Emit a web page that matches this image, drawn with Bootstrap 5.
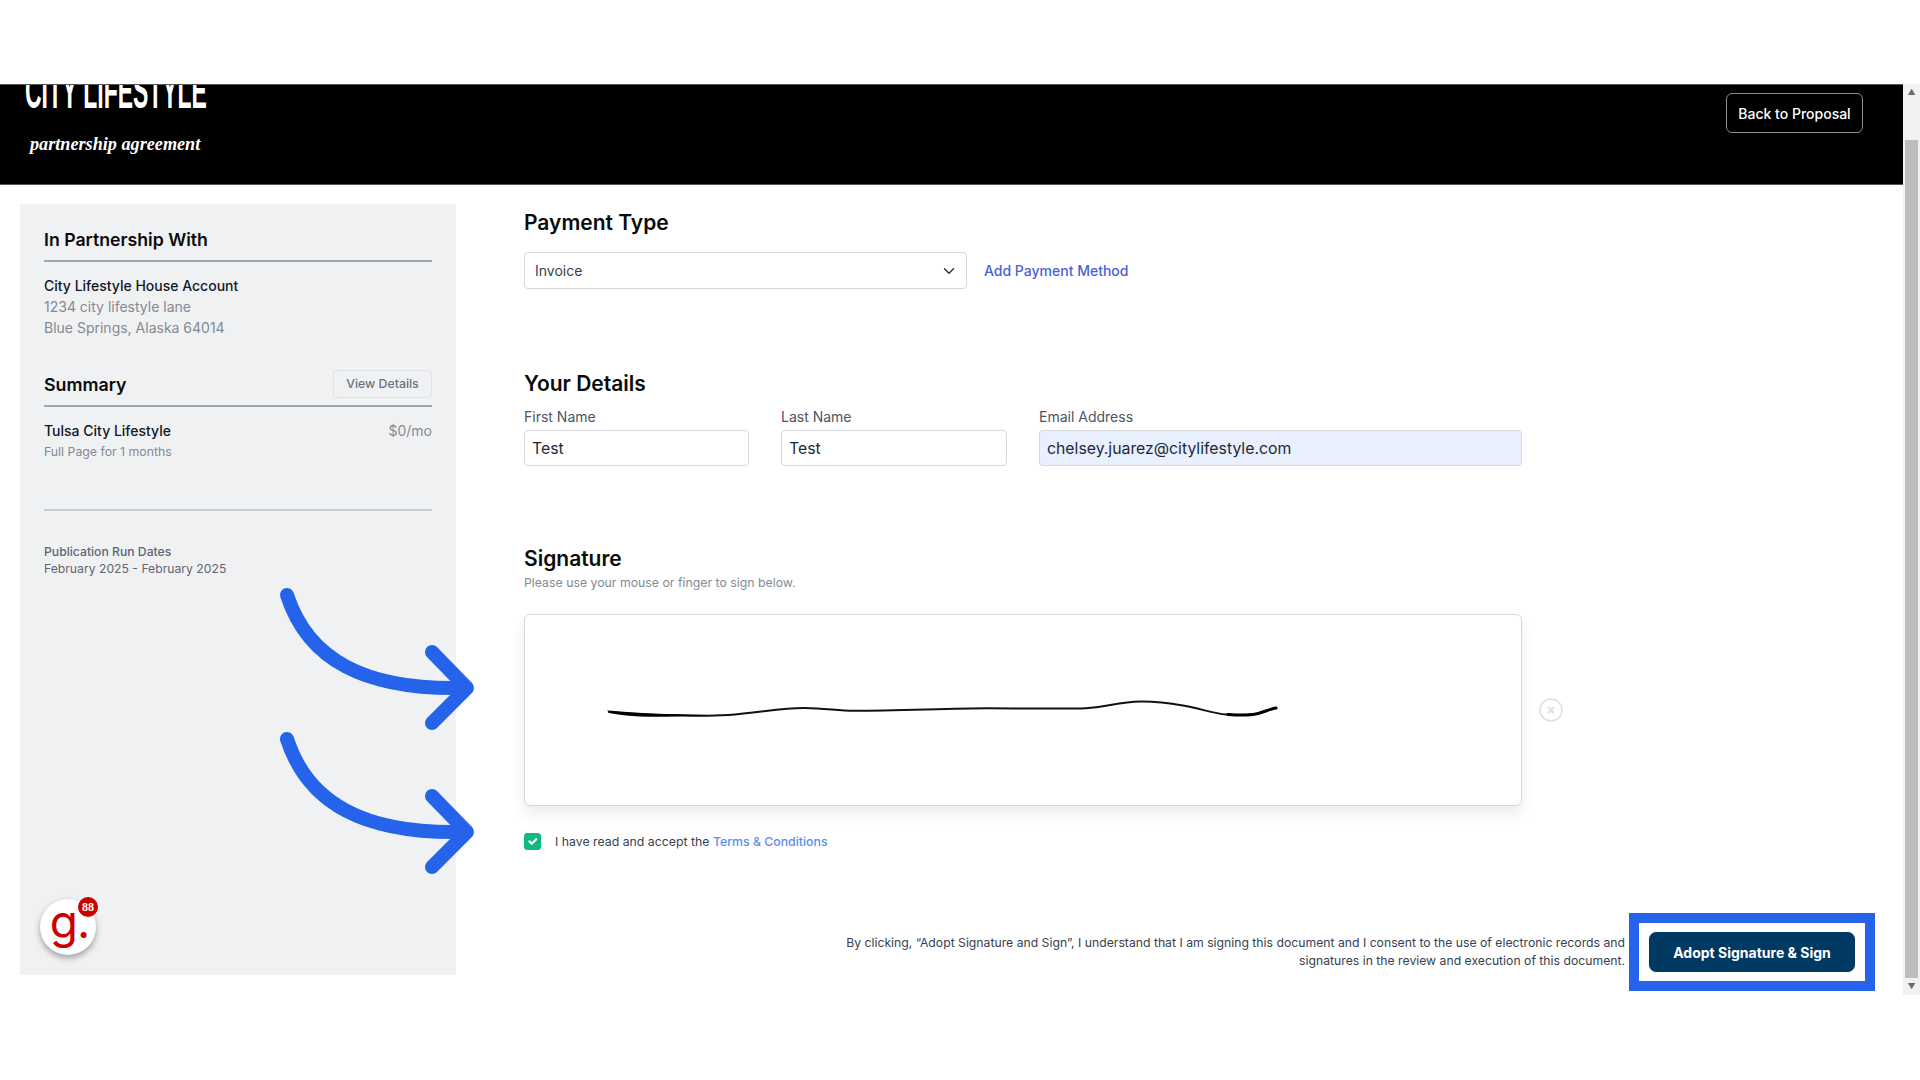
<!DOCTYPE html>
<html lang="en"><head><meta charset="utf-8"><title>Partnership agreement</title>
<link rel="stylesheet" href="https://cdn.jsdelivr.net/npm/bootstrap@5.3.0/dist/css/bootstrap.min.css">
<style>
html,body{height:100%;overflow:hidden}
body{background:#fff;font-family:Inter,"Liberation Sans",sans-serif;color:#111827;position:relative}
.shot{margin-top:84px;height:911px;overflow:hidden}
.pagecol{width:1903px}
.hdr{height:101px;background:#000;overflow:hidden;padding:0 40px 0 25px;border-top:1px solid #555;border-bottom:1px solid #555}
.logo1{font:700 50px/50px "Liberation Sans",sans-serif;color:#fff;width:370px;white-space:nowrap;transform:scaleX(.459);transform-origin:left top;margin-top:-19px}
.logo2{font:italic 700 18.2px/22px "Liberation Serif",serif;color:#fff;margin:17px 0 0 5px;white-space:nowrap}
.backbtn{--bs-btn-color:#fff;--bs-btn-border-color:#8c8c8c;--bs-btn-hover-color:#fff;width:137px;height:40px;margin-top:8px;padding:0;font-size:14px;font-weight:500;border-radius:6px;border-width:1.5px}
.side{width:436px;height:771px;margin:19px 0 0 20px;background:#f0f1f3;padding:24px;flex:none}
.sh1{font-size:17.7px;font-weight:600;line-height:24px;margin:0;color:#0b0b0b}
.rule1{height:2px;background:#9ea4b0;margin:8px 0 0}
.acct{font-size:14px;line-height:21px;margin-top:13px;color:#858a93}
.acct b,.itemname{font-weight:500;color:#111827}
.sumrow{margin-top:30px;height:34px}
.sumh{font-size:17.8px;font-weight:600;margin:0;line-height:24px;color:#0b0b0b}
.viewbtn{--bs-btn-color:#6b7280;--bs-btn-border-color:#dfe1e6;--bs-btn-hover-color:#6b7280;font-size:12.3px;font-weight:500;height:28px;width:99px;padding:0;border-radius:4px;border-width:1.5px;margin-bottom:2px}
.rule2{height:2px;background:#9ea4b0;margin:3px 0 0}
.itemrow{font-size:14px;line-height:21px;margin-top:13px}
.price{color:#858a93}
.itemsub{font-size:12.3px;color:#858a93;line-height:20px;margin-top:1px}
.rule3{height:2px;background:#c7cbd2;margin:47px 0 0}
.pubt{font-size:12.2px;font-weight:500;color:#5f6672;line-height:17px;margin-top:32px}
.pubd{font-size:12.2px;color:#5f6672;line-height:17px}
.maincol{margin-left:68px;flex:1 1 0;padding-right:28px}
.mh{font-size:21px;font-weight:600;line-height:26px;margin:0;color:#0b0b0b}
.payh{margin-top:25px}
.payrow{margin-top:16px}
.paysel{width:443px;height:37px;font-size:14px;padding:0 32px 0 10px;color:#374151;border-color:#d5d8dd;background-position:right 9px center;border-radius:4px}
.addlink{font-size:14px;font-weight:500;color:#4a5fd9;text-decoration:none;margin-left:17px}
.deth{margin-top:82px}
.fldlabel{font-size:14px;color:#4b5563;line-height:20px;margin:10px 0 3px;display:block}
.fld{height:36px;font-size:15.8px;padding:0 7px;border-color:#d5d8dd;border-radius:4px;color:#1f2937}
.fld.auto{background:#e8f0fe}
.w1{width:225px}.w2{width:226px}.w3{width:483px}
.rowgap{gap:32px}
.sigh{margin-top:80px}
.sigsub{font-size:12.3px;color:#858a93;line-height:16px;margin-top:3px}
.sigwrap{margin-top:23px}
.sigbox{height:192px;width:998px;background:#fff;border:1px solid #d4d8de;border-radius:6px;box-shadow:0 8px 14px rgba(0,0,0,.08)}
.sigbox svg{display:block}
.clr{width:24px;height:24px;flex:none;margin-left:17px}
.agree{margin-top:27px;font-size:12.3px;color:#374151;line-height:17px}
.agree .form-check-input{width:17px;height:17px;margin:0 14px 0 0;border-radius:3px;background-color:#10b981;border-color:#10b981;flex:none}
.agree a{color:#5b8def;text-decoration:none;font-weight:500}
.footrow{margin-top:63px}
.legal{font-size:12.23px;line-height:18px;color:#374151;text-align:right;width:800px;margin-right:4px}
.markbox{border:10px solid #2563eb;padding:9px 10px;width:246px;height:78px;flex:none}
.adopt{--bs-btn-bg:#003a63;--bs-btn-color:#fff;--bs-btn-hover-bg:#003a63;--bs-btn-hover-color:#fff;--bs-btn-border-color:#003a63;width:100%;height:40px;padding:0;font-size:14px;font-weight:700;border-radius:7px}
.sbar{width:17px;height:911px;background:#f1f1f1;flex:none}
.sarrow{height:17px;font-size:8px;line-height:17px;color:#6b6b6b;text-align:center}
.sthumb{width:13px;background:#bdbdbd;margin:39px auto 0;height:838px}
.overlay{position:absolute;left:0;top:0;pointer-events:none}
.gbtn{position:absolute;left:40px;top:899px;width:56px;height:56px;border-radius:50%;background:#fff;box-shadow:0 3px 6px rgba(0,0,0,.35);text-align:center;color:#cc0000;font:400 46px/44px Inter,sans-serif;letter-spacing:-1px;padding-left:3px}
.gdot{position:absolute;left:78px;top:897px;width:20px;height:20px;border-radius:50%;background:#cc0000;color:#fff;font:700 12px/20px "Liberation Serif",serif;text-align:center}
</style></head><body>
<div class="shot d-flex">
 <div class="pagecol">
  <header class="hdr d-flex justify-content-between align-items-start">
   <div><div class="logo1">CITY LIFESTYLE</div><div class="logo2">partnership agreement</div></div>
   <button class="btn backbtn" type="button">Back to Proposal</button>
  </header>
  <div class="d-flex">
   <aside class="side">
    <h2 class="sh1">In Partnership With</h2>
    <div class="rule1"></div>
    <div class="acct"><b>City Lifestyle House Account</b><br>1234 city lifestyle lane<br>Blue Springs, Alaska 64014</div>
    <div class="sumrow d-flex justify-content-between align-items-center"><h2 class="sumh">Summary</h2><button class="btn viewbtn" type="button">View Details</button></div>
    <div class="rule2"></div>
    <div class="itemrow d-flex justify-content-between"><span class="itemname">Tulsa City Lifestyle</span><span class="price">$0/mo</span></div>
    <div class="itemsub">Full Page for 1 months</div>
    <div class="rule3"></div>
    <div class="pubt">Publication Run Dates</div>
    <div class="pubd">February 2025 - February 2025</div>
   </aside>
   <main class="maincol">
    <h2 class="mh payh">Payment Type</h2>
    <div class="payrow d-flex align-items-center">
     <select class="form-select paysel"><option>Invoice</option></select>
     <a href="#" class="addlink">Add Payment Method</a>
    </div>
    <h2 class="mh deth">Your Details</h2>
    <div class="d-flex rowgap">
     <div class="w1"><label class="fldlabel">First Name</label><input class="form-control fld" value="Test"></div>
     <div class="w2"><label class="fldlabel">Last Name</label><input class="form-control fld" value="Test"></div>
     <div class="w3"><label class="fldlabel">Email Address</label><input class="form-control fld auto" value="chelsey.juarez@citylifestyle.com"></div>
    </div>
    <h2 class="mh sigh">Signature</h2>
    <div class="sigsub">Please use your mouse or finger to sign below.</div>
    <div class="sigwrap d-flex align-items-center">
     <div class="sigbox flex-shrink-0">
      <svg width="996" height="190" viewBox="525 615 996 190" fill="none">
       <path d="M609 712 C618 712.5 640 714.5 663 715 C690 716 712 716 728 715 C760 712.5 785 707.5 805 708 C825 708.5 838 710.5 854 710.8 C900 710.5 950 708.5 988 708.3 C1030 708.5 1070 709 1086 708.2 C1105 707 1120 702 1140 701.5 C1160 701.3 1172 703.5 1183 705.5 C1200 708.5 1214 713.5 1226 714.5 C1238 715.3 1247 715 1254 714" stroke="#111" stroke-width="2" stroke-linecap="round"/>
       <path d="M607 710.5 C618 711 640 713.5 665 714 L710 715 L665 716.8 C640 716.8 622 716 610 713 Z" fill="#000"/>
       <path d="M1228 714.5 C1240 715.5 1250 715.5 1258 713.5 C1264 712 1270 709 1276 708" stroke="#000" stroke-width="3" stroke-linecap="round"/>
      </svg>
     </div>
     <svg class="clr" viewBox="0 0 24 24" fill="none" stroke="#dde1e7" stroke-width="1.6"><circle cx="12" cy="12" r="11"/><path d="M9 9l6 6M15 9l-6 6" stroke-width="1.8"/></svg>
    </div>
    <div class="agree d-flex align-items-center">
     <input class="form-check-input" type="checkbox" checked aria-label="accept">
     <span>I have read and accept the <a href="#">Terms &amp; Conditions</a></span>
    </div>
    <div class="footrow d-flex justify-content-end align-items-center">
     <div class="legal">By clicking, “Adopt Signature and Sign”, I understand that I am signing this document and I consent to the use of electronic records and signatures in the review and execution of this document.</div>
     <div class="markbox"><button class="btn adopt" type="button">Adopt Signature &amp; Sign</button></div>
    </div>
   </main>
  </div>
 </div>
 <div class="sbar">
  <div class="sarrow">▲</div><div class="sthumb"></div><div class="sarrow">▼</div>
 </div>
</div>
<svg class="overlay" width="1920" height="1080" fill="none" stroke="#2563eb" stroke-width="14" stroke-linecap="round" stroke-linejoin="round">
 <path d="M287 595 C308 660 365 690 462 688"/><path d="M432 652 L467 688 L432 723"/>
 <path d="M287 739 C308 804 365 834 462 832"/><path d="M432 796 L467 832 L432 867"/>
</svg>
<div class="gbtn">g.</div>
<div class="gdot">88</div>
</body></html>
